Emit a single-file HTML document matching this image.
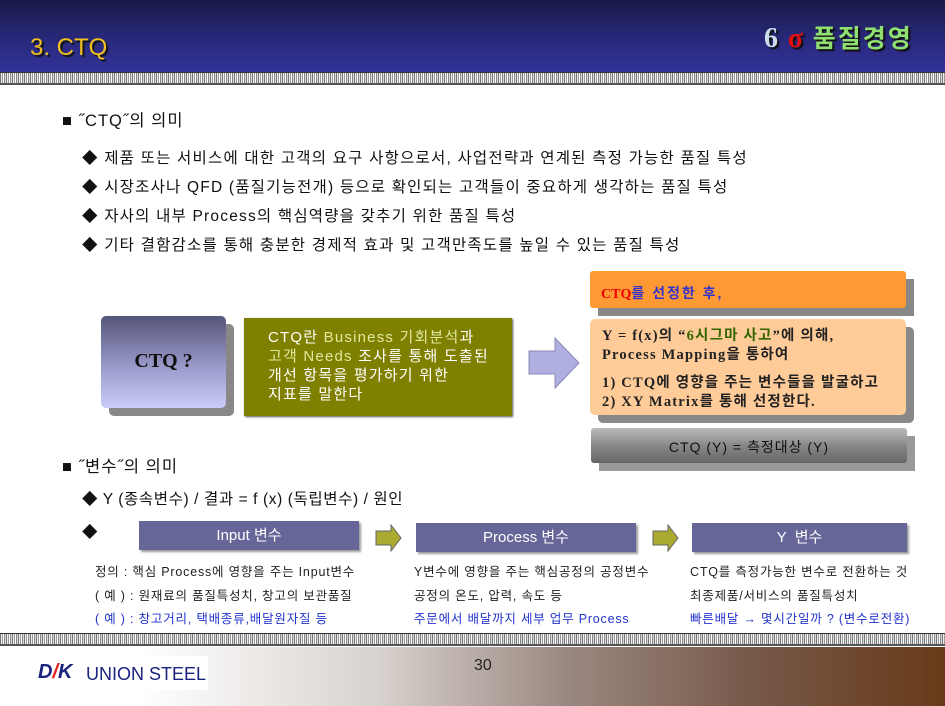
<!DOCTYPE html>
<html><head><meta charset="utf-8"><style>
body{margin:0;width:945px;height:706px;position:relative;overflow:hidden;background:#fff;font-family:"Liberation Sans","Noto Sans CJK KR",sans-serif;}
.a{position:absolute;white-space:nowrap}
.hdr{left:0;top:0;width:945px;height:73px;background:linear-gradient(#1a1a48,#2a2a80 60%,#33339a)}
.pat{left:0;width:945px;height:10px;background:repeating-linear-gradient(90deg,#777 0 1px,#eee 1px 2px,#999 2px 3px,#fff 3px 4px,#888 4px 5px,#ddd 5px 6px);border-top:1px solid #333;border-bottom:2px solid #555}
.b{font-size:15.5px;color:#111;letter-spacing:1.2px}
.box{position:absolute}
.pb{position:absolute;background:#666699;color:#fff;font-size:15px;text-align:center;line-height:29px;box-shadow:2px 2px 2px #999}
.t{font-size:12.5px;color:#222;letter-spacing:0.8px}
.bl{color:#2233cc}
</style></head><body>
<div class="a hdr"></div>
<div class="a" style="left:30px;top:34px;font-size:24px;color:#f0c020;text-shadow:2px 2px 1px #111">3. CTQ</div>
<div class="a" style="left:764px;top:19px;font-size:28px;font-weight:bold;text-shadow:2px 2px 1px #111;letter-spacing:1px"><span style="font-family:'Liberation Serif',serif;color:#cde">6</span> <span style="color:#e01010;font-family:'Liberation Serif',serif">σ</span> <span style="color:#8fe070;font-size:25px;letter-spacing:2px">품질경영</span></div>
<div class="a pat" style="top:72px"></div>
<div class="a b" style="left:62px;top:107px;font-size:16.5px;letter-spacing:1px">■ ˝CTQ˝의 의미</div>
<div class="a b" style="left:82px;top:146px">◆ 제품 또는 서비스에 대한 고객의 요구 사항으로서, 사업전략과 연계된 측정 가능한 품질 특성</div>
<div class="a b" style="left:82px;top:175px">◆ 시장조사나 QFD (품질기능전개) 등으로 확인되는 고객들이 중요하게 생각하는 품질 특성</div>
<div class="a b" style="left:82px;top:204px">◆ 자사의 내부 Process의 핵심역량을 갖추기 위한 품질 특성</div>
<div class="a b" style="left:82px;top:233px">◆ 기타 결함감소를 통해 충분한 경제적 효과 및 고객만족도를 높일 수 있는 품질 특성</div>

<div class="box" style="left:109px;top:324px;width:125px;height:92px;background:#888;border-radius:5px"></div>
<div class="box" style="left:101px;top:316px;width:125px;height:92px;background:linear-gradient(#55557a,#a0a0d0 60%,#ccccf8);border-radius:5px"></div>
<div class="a" style="left:101px;top:350px;width:125px;text-align:center;font-family:'Liberation Serif',serif;font-weight:bold;font-size:20px;color:#111">CTQ ?</div>
<div class="box" style="left:244px;top:318px;width:268px;height:98px;background:#808000;box-shadow:1px 1px 2px #555"></div>
<div class="a" style="left:268px;top:328px;font-size:15px;color:#fff;line-height:19px;letter-spacing:1.2px">CTQ란 <span style="color:#dfe8a0">Business 기회분석</span>과<br><span style="color:#dfe8a0">고객 Needs</span> 조사를 통해 도출된<br>개선 항목을 평가하기 위한<br>지표를 말한다</div>
<svg class="a" style="left:527px;top:336px" width="54" height="56"><path d="M2 15H28V2L52 27L28 52V38H2Z" fill="#b0b0e0" stroke="#8888b8"/></svg>

<div class="box" style="left:598px;top:279px;width:316px;height:37px;background:#888"></div>
<div class="box" style="left:590px;top:271px;width:316px;height:37px;background:#ff9933;border-radius:3px"></div>
<div class="a" style="left:601px;top:283px;font-size:14px;font-weight:bold;color:#3333cc;letter-spacing:2px"><span style="color:#e00;font-family:'Liberation Serif',serif;letter-spacing:0">CTQ</span>를 선정한 후,</div>
<div class="box" style="left:598px;top:327px;width:316px;height:96px;background:#888;border-radius:5px"></div>
<div class="box" style="left:590px;top:319px;width:316px;height:96px;background:#ffcc99;border-radius:5px"></div>
<div class="a" style="left:602px;top:327px;font-size:14.5px;font-weight:bold;color:#222;font-family:'Liberation Serif','Noto Sans CJK KR',serif;line-height:19px;letter-spacing:1.2px">Y = f(x)의 “<span style="color:#336600">6시그마 사고</span>”에 의해,<br>Process Mapping을 통하여</div>
<div class="a" style="left:602px;top:374px;font-size:14.5px;font-weight:bold;color:#222;font-family:'Liberation Serif','Noto Sans CJK KR',serif;line-height:19px;letter-spacing:1.2px">1) CTQ에 영향을 주는 변수들을 발굴하고<br>2) XY Matrix를 통해 선정한다.</div>
<div class="box" style="left:599px;top:436px;width:316px;height:35px;background:#999"></div>
<div class="box" style="left:591px;top:428px;width:316px;height:35px;background:linear-gradient(#bbb,#888 50%,#666);border-radius:3px"></div>
<div class="a" style="left:591px;top:437px;width:316px;text-align:center;font-size:14px;color:#111;letter-spacing:1px">CTQ (Y) = 측정대상 (Y)</div>

<div class="a b" style="left:62px;top:453px;font-size:16.5px;letter-spacing:1px">■ ˝변수˝의 의미</div>
<div class="a b" style="left:82px;top:487px;letter-spacing:0.6px">◆ Y (종속변수) / 결과 = f (x) (독립변수) / 원인</div>
<div class="a b" style="left:82px;top:520px">◆</div>
<div class="pb" style="left:139px;top:521px;width:220px;height:29px">Input 변수</div>
<div class="pb" style="left:416px;top:523px;width:220px;height:29px">Process 변수</div>
<div class="pb" style="left:692px;top:523px;width:215px;height:29px">Y &nbsp;변수</div>
<svg class="a" style="left:375px;top:524px" width="28" height="28"><path d="M1 7H16V1L26 14L16 27V21H1Z" fill="#aaaa33" stroke="#666"/></svg>
<svg class="a" style="left:652px;top:524px" width="28" height="28"><path d="M1 7H16V1L26 14L16 27V21H1Z" fill="#aaaa33" stroke="#666"/></svg>
<div class="a t" style="left:95px;top:561px">정의 : 핵심 Process에 영향을 주는 Input변수</div>
<div class="a t" style="left:95px;top:585px">( 예 ) : 원재료의 품질특성치, 창고의 보관품질</div>
<div class="a t bl" style="left:95px;top:608px">( 예 ) : 창고거리, 택배종류,배달원자질 등</div>
<div class="a t" style="left:414px;top:561px">Y변수에 영향을 주는 핵심공정의 공정변수</div>
<div class="a t" style="left:414px;top:585px">공정의 온도, 압력, 속도 등</div>
<div class="a t bl" style="left:414px;top:608px">주문에서 배달까지 세부 업무 Process</div>
<div class="a t" style="left:690px;top:561px">CTQ를 측정가능한 변수로 전환하는 것</div>
<div class="a t" style="left:690px;top:585px">최종제품/서비스의 품질특성치</div>
<div class="a t bl" style="left:690px;top:608px">빠른배달 → 몇시간일까 ? (변수로전환)</div>

<div class="a pat" style="top:633px"></div>
<div class="a" style="left:0;top:647px;width:945px;height:59px;background:linear-gradient(90deg,#fff 15%,#d8d2ce 40%,#9a8880 60%,#765848 80%,#683a18)"></div>
<div class="a" style="left:18px;top:656px;width:190px;height:34px;background:#fff"></div>
<div class="a" style="left:38px;top:661px;font-size:20px;font-weight:bold;color:#1a237e;font-style:italic">D<span style="color:#e02020">/</span>K</div>
<div class="a" style="left:86px;top:664px;font-size:18px;color:#1a237e">UNION STEEL</div>
<div class="a" style="left:474px;top:657px;font-size:16px;color:#222">30</div>
</body></html>
